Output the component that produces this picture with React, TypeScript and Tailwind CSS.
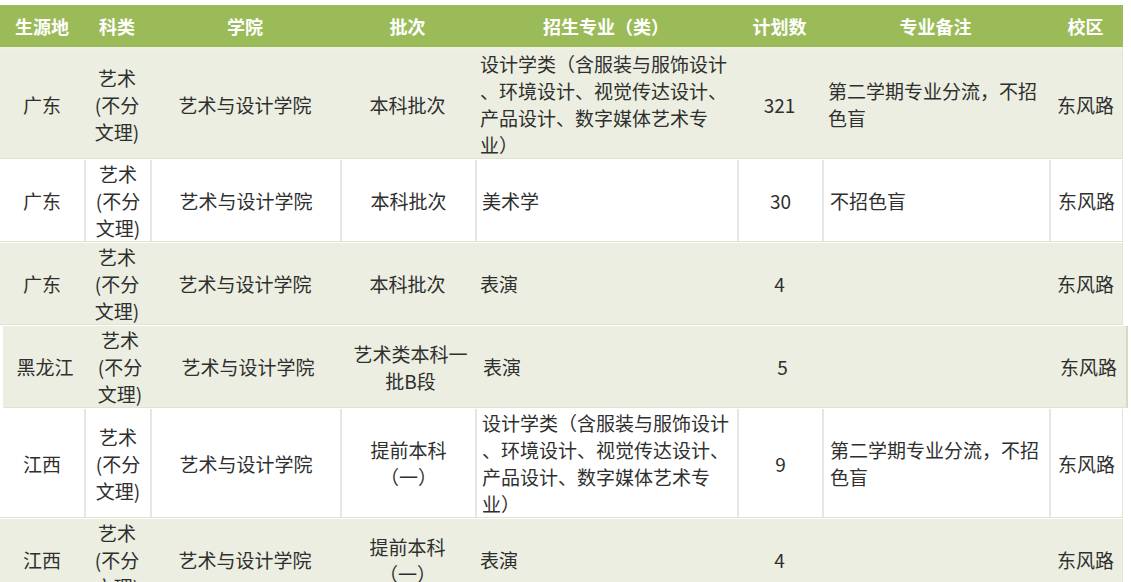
const cols = "grid grid-cols-[84px_66px_190px_135px_262px_85px_227px_73px]";

const heads = ["生源地", "科类", "学院", "批次", "招生专业（类）", "计划数", "专业备注", "校区"];

const kelei = ["艺术", "(不分", "文理)"];
const sheji = ["设计学类（含服装与服饰设计", "、环境设计、视觉传达设计、", "产品设计、数字媒体艺术专", "业）"];
const beizhu = ["第二学期专业分流，不招", "色盲"];

type RowData = {
  place: string;
  batch: string[];
  major: string[];
  plan: string;
  note: string[];
  tone: "green" | "white";
  shift?: boolean;
};

const rows: RowData[] = [
  { place: "广东", batch: ["本科批次"], major: sheji, plan: "321", note: beizhu, tone: "green" },
  { place: "广东", batch: ["本科批次"], major: ["美术学"], plan: "30", note: ["不招色盲"], tone: "white" },
  { place: "广东", batch: ["本科批次"], major: ["表演"], plan: "4", note: [], tone: "green" },
  { place: "黑龙江", batch: ["艺术类本科一", "批B段"], major: ["表演"], plan: "5", note: [], tone: "green", shift: true },
  { place: "江西", batch: ["提前本科", "（一）"], major: sheji, plan: "9", note: beizhu, tone: "white" },
  { place: "江西", batch: ["提前本科", "（一）"], major: ["表演"], plan: "4", note: [], tone: "green" },
];

function Lines({ items }: { items: string[] }) {
  return (
    <>
      {items.map((t, i) => (
        <span key={i} className="block whitespace-nowrap">
          {t}
        </span>
      ))}
    </>
  );
}

function Row({ r }: { r: RowData }) {
  const bg = r.tone === "green" ? "bg-[#ebeee0]" : "bg-white";
  const cell =
    r.tone === "white"
      ? "flex flex-col justify-center border-l-2 border-[#e6e6e6] first:border-l-0"
      : "flex flex-col justify-center";
  return (
    <div
      className={`${cols} ${bg} border-b border-[#dfe4cf] mb-px ${
        r.shift ? "ml-[3px] w-[1125px] border-r-2 border-r-[#d6dcc2]" : "w-[1123px] border-r border-r-[#e0e4d0]"
      }`}
    >
      <div className={`${cell} items-center text-center`}>{r.place}</div>
      <div className={`${cell} items-center text-center`}>
        <Lines items={kelei} />
      </div>
      <div className={`${cell} items-center text-center`}>艺术与设计学院</div>
      <div className={`${cell} items-center text-center`}>
        <Lines items={r.batch} />
      </div>
      <div className={`${cell} pl-[5px]`}>
        <Lines items={r.major} />
      </div>
      <div className={`${cell} items-center text-center`}>{r.plan}</div>
      <div className={`${cell} pl-[6px]`}>
        <Lines items={r.note} />
      </div>
      <div className={`${cell} items-center text-center`}>东风路</div>
    </div>
  );
}

export default function App() {
  return (
    <div className="w-[1131px] h-[582px] overflow-hidden bg-white pt-[5px] font-['Microsoft_YaHei','Noto_Sans_CJK_SC',sans-serif] text-[19px] leading-[27px] text-[#2f2f2f]">
      <div className={`${cols} w-[1123px] h-[42px] bg-[#9bbb59] items-center border-b-[3px] border-[#eef0e4] box-content`}>
        {heads.map((h) => (
          <div key={h} className="text-center font-bold text-white text-[18px]">
            {h}
          </div>
        ))}
      </div>
      {rows.map((r, i) => (
        <Row key={i} r={r} />
      ))}
    </div>
  );
}
